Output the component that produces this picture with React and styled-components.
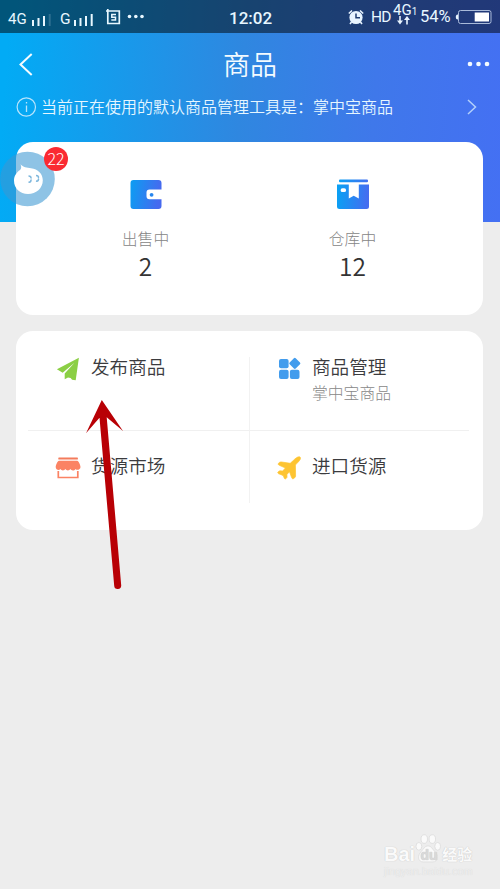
import React from "react";
import styled, { createGlobalStyle } from "styled-components";

const GlobalStyle = createGlobalStyle`
  *, *::before, *::after { box-sizing: border-box; }
  body {
    margin: 0;
    background: #ededed;
    font-family: Roboto, "Noto Sans CJK SC", sans-serif;
  }
  svg { display: block; flex: none; overflow: visible; }
`;

const Screen = styled.div`
  position: relative;
  width: 500px;
  height: 889px;
  overflow: hidden;
  background: #ededed;
`;

const Hero = styled.header`
  height: 222px;
  background: linear-gradient(94deg, #02abf5 2%, #2f87e0 48%, #3f78ea 74%, #4470f3 100%);
`;

const StatusBar = styled.div`
  display: grid;
  grid-template-columns: 229px 119px 1fr;
  height: 33px;
  background: rgba(0, 0, 0, 0.5);
  color: #e8f7ff;
`;

const StatusGroup = styled.div`
  display: flex;
  align-items: center;
  padding: ${(p) => p.$pad || "0"};
`;

const StatusText = styled.span`
  flex: none;
  font-size: ${(p) => p.$size || 15}px;
  font-weight: ${(p) => p.$weight || 400};
  line-height: 20px;
  width: ${(p) => p.$width}px;
  white-space: nowrap;
  letter-spacing: ${(p) => p.$spacing || 0}px;
`;

const Network = styled.div`
  display: flex;
  flex-direction: column;
  width: 27px;
  height: 27px;
  font-size: 15px;
  line-height: 14px;
  white-space: nowrap;

  sup {
    font-size: 10px;
    line-height: 1;
    vertical-align: 0;
  }
  svg { margin: -1px 0 0 4px; }
`;

const TitleBar = styled.div`
  display: grid;
  grid-template-columns: 52px 1fr 52px;
  align-items: center;
  height: 63px;
  padding: 0 0 1px;
  color: #f4fbff;

  h1 {
    margin: 3px 0 0;
    font-size: 27px;
    line-height: 40px;
    font-weight: 350;
    text-align: center;
  }
`;

const BackIcon = styled.svg`
  margin-left: 19px;
`;

const MoreIcon = styled.svg`
  margin-left: 20px;
`;

const Notice = styled.div`
  display: flex;
  align-items: center;
  height: 22px;
  padding: 0 23px 0 16px;
  color: #e6f6ff;
  font-size: 16px;
  font-weight: 350;
  line-height: 22px;

  span {
    flex: 1;
    margin: 2px 0 0 4px;
    white-space: nowrap;
  }
`;

const Content = styled.main`
  display: flex;
  flex-direction: column;
  gap: 16px;
  margin: -80px 17px 0 16px;
`;

const Card = styled.section`
  height: ${(p) => p.$height}px;
  border-radius: 17px;
  background: #fff;
`;

const Stats = styled(Card)`
  display: grid;
  grid-template-columns: 207px 207px;
  padding: 37px 0 0 26px;
`;

const Stat = styled.div`
  display: flex;
  flex-direction: column;
  align-items: center;
`;

const StatLabel = styled.span`
  margin-top: 19px;
  font-size: 15.8px;
  font-weight: 300;
  line-height: 24px;
  color: #858585;
`;

const StatValue = styled.span`
  font-family: "Noto Sans CJK SC", sans-serif;
  font-size: 24.5px;
  font-weight: 350;
  line-height: 28px;
  color: #333;
`;

const Menu = styled(Card)`
  display: grid;
  grid-template-columns: 222px 219px;
  grid-template-rows: 73px 73px;
  padding: 26px 14px 0 12px;
`;

const MenuItem = styled.div`
  display: flex;
  gap: 10px;
  padding: ${(p) => (p.$lower ? "25px" : "0")} 0 0 ${(p) => (p.$right ? "26px" : "27px")};
  border-right: ${(p) => (p.$right ? "0" : "1px solid #f2f2f2")};
  border-top: ${(p) => (p.$lower ? "1px solid #f0f0f0" : "0")};
`;

const MenuText = styled.div`
  display: flex;
  flex-direction: column;
  margin-top: -2px;
  white-space: nowrap;

  strong {
    font-size: 18.6px;
    font-weight: 350;
    line-height: 27px;
    color: #3b3b3e;
  }
  small {
    font-size: 15.8px;
    font-weight: 300;
    line-height: 24px;
    color: #888;
  }
`;

const Assistant = styled.div`
  position: absolute;
  top: 147px;
  left: 0;
  width: 70px;
  height: 60px;
`;

const Badge = styled.span`
  position: absolute;
  top: 0;
  left: 44px;
  width: 24px;
  height: 24px;
  border-radius: 50%;
  background: #fa2a32;
  color: #fff;
  font-family: "Noto Sans CJK SC", sans-serif;
  font-size: 16px;
  font-weight: 300;
  line-height: 23px;
  text-align: center;
`;

const Pointer = styled.svg`
  position: absolute;
  top: 398px;
  left: 80px;
`;

const Watermark = styled.div`
  position: absolute;
  left: 384px;
  top: 834px;
  width: 92px;
  color: #fafafa;
  text-shadow: 0 0 1px #c9c9c9, 0 0 1px #d4d4d4;
`;

const Brand = styled.div`
  display: flex;
  align-items: flex-end;
  height: 32px;
  font: 700 20px/24px "Liberation Sans", sans-serif;

  svg { margin: 0 1px 3px 0; }
  em {
    font: 700 15px/24px "Noto Sans CJK SC", sans-serif;
  }
`;

const Site = styled.div`
  font: 400 11px/11px "Liberation Sans", sans-serif;
  color: #eeeeee;
  text-shadow: 0 0 1px #d2d2d2;
  white-space: nowrap;
`;

function Signal({ faded }) {
  return (
    <svg width="21" height="14" viewBox="0 0 21 14" fill="#e8f7ff">
      <rect x="0" y="8" width="2" height="6" />
      <rect x="5.500" y="6" width="2" height="8" />
      <rect x="11" y="4" width="2" height="10" />
      <rect x="16.700" y="2" width="2" height="12" opacity={faded ? 0.18 : 1} />
    </svg>
  );
}

function WalletIcon() {
  return (
    <svg width="32" height="30" viewBox="0 0 32 30">
      <defs>
        <linearGradient id="wallet" x1="0" y1="0" x2="1" y2="0.15">
          <stop offset="0" stopColor="#0b9ef2" />
          <stop offset="1" stopColor="#4669ef" />
        </linearGradient>
      </defs>
      <path
        fill="url(#wallet)"
        d="M3.500 1h25a3 3 0 0 1 3 3v6.500H19.500a3 3 0 0 0-3 3v3.700a3 3 0 0 0 3 3h12V27a3 3 0 0 1-3 3h-25a3 3 0 0 1-3-3V4a3 3 0 0 1 3-3Z"
      />
      <circle cx="21.600" cy="15.800" r="1.900" fill="#2786ee" />
    </svg>
  );
}

function StoreIcon() {
  return (
    <svg width="32" height="30" viewBox="0 0 32 30">
      <defs>
        <linearGradient id="box" gradientUnits="userSpaceOnUse" x1="0" y1="8" x2="32" y2="11">
          <stop offset="0" stopColor="#08a2f4" />
          <stop offset="1" stopColor="#456cf0" />
        </linearGradient>
      </defs>
      <g fill="url(#box)">
        <rect x="2" y="0.500" width="29" height="2.800" rx="1" />
        <path
          fillRule="evenodd"
          d="M0 5.500h11.800v14l4.900-2.800 5.100 2.800v-14H32V27.500a2.500 2.500 0 0 1-2.500 2.500h-27A2.500 2.500 0 0 1 0 27.500ZM5.500 9.300a1.800 1.800 0 0 0 0 3.800h1.700a1.800 1.800 0 0 0 0-3.800Z"
        />
      </g>
    </svg>
  );
}

function PlaneIcon() {
  return (
    <svg width="26" height="24" viewBox="0 0 26 24">
      <path fill="#8bcf45" d="M23.900.7 1.900 12.200l5.800 3.600L19.500 5.800 9.700 16.500v5.800l3.300-1.900 2.600.7 1.500 1.700 3.600.5Z" />
    </svg>
  );
}

function GridIcon() {
  return (
    <svg width="26" height="24" viewBox="0 0 26 24" fill="#429ced">
      <rect x="3" y="2" width="9.600" height="9.300" rx="2" />
      <rect x="3" y="12.800" width="9.600" height="9.300" rx="2" />
      <rect x="13.900" y="12.800" width="9.600" height="9.300" rx="2" />
      <rect x="14.500" y="2" width="8.600" height="8.600" rx="1.300" transform="rotate(45 18.800 6.300)" />
    </svg>
  );
}

function MarketIcon() {
  return (
    <svg width="26" height="24" viewBox="0 0 26 24">
      <rect x="3.300" y="1.600" width="19.600" height="2" rx=".6" fill="#f47b5b" />
      <path
        fill="#fb8364"
        d="M4 4.800h18.200c1.400 0 3.300 4.700 3.300 6.200 0 2.700-3.700 3.800-5 1.900-1 2-4.200 2-5.100.2-1 1.900-4 1.900-5 0-1 1.900-4 1.900-5 0C4 15.100.7 13.900.7 11 .7 9.400 2.600 4.800 4 4.800Z"
      />
      <path fill="none" stroke="#fb8364" strokeWidth="1.700" d="M3.300 15v6.500h19.500V15" />
    </svg>
  );
}

function JetIcon() {
  return (
    <svg width="26" height="24" viewBox="0 0 26 24">
      <path
        fill="#fdc432"
        stroke="#fdc432"
        strokeWidth=".7"
        strokeLinejoin="round"
        d="M17.300 4.500c1.600-1.700 4-3.800 6-3.700 1.300.1 1.500 1.500.8 2.800-.8 1.500-3.200 3.800-4.700 5.400l.2 11.200c0 .8-1.600 2.500-2.600 2.600-.9 0-1.200-.7-1.500-1.500l-2-5.500-2.600 2.600.1 2.700c0 .8-1.300 2-2 1.900-.7-.1-1.300-2.400-1.900-3.400-1.300-.9-4.900-1.500-5.300-2.600-.3-.9 1.400-2.200 2.300-2.200l2.500.3L9.400 12 3.300 9.300c-1-.5-1.300-1-.9-1.800.6-1.200 2-1.700 3.300-1.500l8.500 1.300Z"
      />
    </svg>
  );
}

const statItems = [
  { label: "出售中", value: "2", Icon: WalletIcon },
  { label: "仓库中", value: "12", Icon: StoreIcon },
];

const menuItems = [
  { title: "发布商品", Icon: PlaneIcon },
  { title: "商品管理", note: "掌中宝商品", Icon: GridIcon },
  { title: "货源市场", Icon: MarketIcon },
  { title: "进口货源", Icon: JetIcon },
];

export default function App() {
  return (
    <Screen>
      <GlobalStyle />
      <Hero>
        <StatusBar>
          <StatusGroup $pad="4px 0 0 8px">
            <StatusText $width={24} $size={15}>4G</StatusText>
            <Signal faded />
            <StatusText $width={21} $size={15.5}>&nbsp;&thinsp;G</StatusText>
            <Signal />
            <svg width="26" height="20" viewBox="-11 0 26 20" fill="none" stroke="#e8f7ff">
              <path strokeWidth="1.700" d="M1.800 0v14.500h11.500V2H0" />
              <path strokeWidth="1.500" d="M10 5.500H5.800v2.700h3.700v2.800H5.300" />
            </svg>
            <svg width="26" height="14" viewBox="0 0 26 14" fill="#e8f7ff">
              <circle cx="8.500" cy="4.500" r="1.800" />
              <circle cx="14.800" cy="4.500" r="1.800" />
              <circle cx="21" cy="4.500" r="1.800" />
            </svg>
          </StatusGroup>
          <StatusGroup $pad="3px 0 0">
            <StatusText $width={50} $size={17} $weight={500}>12:02</StatusText>
          </StatusGroup>
          <StatusGroup>
            <svg width="23" height="16" viewBox="0 0 23 16">
              <circle cx="8" cy="8.500" r="6.600" fill="#e8f4ff" />
              <path d="M.8 4.500 4 1.500m8 0 3.200 3M3.500 13l-1.500 2m10.500-2 1.500 2" stroke="#e8f4ff" strokeWidth="1.600" />
              <path d="M8 4.500v4.300h4" fill="none" stroke="#1f3c70" strokeWidth="1.500" />
            </svg>
            <StatusText $width={22} $size={15.5} $spacing={-0.8}>HD</StatusText>
            <Network>
              <span>4G<sup>1</sup></span>
              <svg width="14" height="9" viewBox="0 0 14 9" fill="#e8f4ff">
                <path d="M2.200 0h1.600v4.500H6L3 8.500 0 4.500h2.200Zm7 8.500V4H7L10 0l3 4h-2.200v4.500Z" />
              </svg>
            </Network>
            <StatusText $width={36} $size={16.5}>54%</StatusText>
            <svg width="36" height="16" viewBox="0 0 36 16">
              <path d="M2 5.500C0 5.500-.2 7-.2 8s.2 2.500 2.200 2.500Z" fill="#e8f4ff" />
              <rect x="2.500" y="1.500" width="32.500" height="13" rx="2" fill="none" stroke="#a9bad9" />
              <rect x="18.700" y="3.500" width="14.300" height="9" fill="#fff" />
            </svg>
          </StatusGroup>
        </StatusBar>
        <TitleBar>
          <BackIcon width="14" height="23" viewBox="0 0 14 23">
            <path d="M12.700 1 1.500 11.500l11.200 10.500" fill="none" stroke="currentColor" strokeWidth="2" />
          </BackIcon>
          <h1>商品</h1>
          <MoreIcon width="24" height="6" viewBox="0 0 24 6" fill="currentColor">
            <circle cx="2" cy="3" r="2.300" />
            <circle cx="10.500" cy="3" r="2.300" />
            <circle cx="19" cy="3" r="2.300" />
          </MoreIcon>
        </TitleBar>
        <Notice>
          <svg width="21" height="22" viewBox="0 0 21 22" fill="none" stroke="#b8e4fc">
            <circle cx="10.300" cy="11" r="9.200" strokeWidth="1.200" />
            <path d="M10.500 9.500v6.500M10.500 6v1.500" strokeWidth="1.300" />
          </svg>
          <span>当前正在使用的默认商品管理工具是：掌中宝商品</span>
          <svg width="10" height="16" viewBox="0 0 10 16">
            <path d="m1 1 7.500 7L1 15" fill="none" stroke="#b3d0fb" strokeWidth="1.500" />
          </svg>
        </Notice>
      </Hero>

      <Content>
        <Stats $height={173}>
          {statItems.map(({ label, value, Icon }) => (
            <Stat key={label}>
              <Icon />
              <StatLabel>{label}</StatLabel>
              <StatValue>{value}</StatValue>
            </Stat>
          ))}
        </Stats>
        <Menu $height={199}>
          {menuItems.map(({ title, note, Icon }, i) => (
            <MenuItem key={title} $right={i % 2 === 1} $lower={i > 1}>
              <Icon />
              <MenuText>
                <strong>{title}</strong>
                {note && <small>{note}</small>}
              </MenuText>
            </MenuItem>
          ))}
        </Menu>
      </Content>

      <Assistant>
        <svg width="60" height="60" viewBox="0 0 60 60">
          <circle cx="27.500" cy="32" r="27.300" fill="#3d97d2" fillOpacity=".58" />
          <path
            fill="#fff"
            d="M20.500 17.200c2.500 3 6.500 3.500 10.500 4 7 .9 11.800 5.500 11.800 12 0 8-6.800 13.800-14.800 13.800S14 41.500 14 33.500c0-5 3-8.500 6-10.500 1.500-1.300 1.500-3.500.5-5.800Z"
          />
          <path
            fill="none"
            stroke="#7fb8dd"
            strokeWidth="1.600"
            d="M28.500 29c2 0 3 1 2.200 2.500m-2.200 3.500c2 .5 3-1 2.200-2.500M36 28.500c2 0 3 1 2.200 2.500M36 34c2 .5 3-1 2.200-2.500"
          />
        </svg>
        <Badge>22</Badge>
      </Assistant>

      <Pointer width="50" height="194" viewBox="0 0 50 194">
        <path fill="#b80005" d="M21.800 2 6 35.300l13.500-15.500L34.200 187.700a3.500 3.500 0 0 0 7-.5L26.700 19.200 43 33Z" />
      </Pointer>

      <Watermark>
        <Brand>
          Bai
          <svg width="26" height="29" viewBox="0 0 24 27" fill="#fafafa" stroke="#dadada" strokeWidth=".7">
            <ellipse cx="3.500" cy="11.500" rx="2.700" ry="3.600" />
            <ellipse cx="8.500" cy="4.700" rx="3" ry="4" />
            <ellipse cx="16" cy="4.700" rx="3" ry="4" />
            <ellipse cx="21" cy="11.500" rx="2.700" ry="3.600" />
            <path d="M12 11c3 0 4 3 6.500 5.500 3.500 3.500 3 9.500-2 9.500h-9c-5 0-5.500-6-2-9.500C8 14 9 11 12 11Z" />
            <text x="5" y="24" stroke="none" fill="#d9d9d9" fontSize="13">du</text>
          </svg>
          <em>经验</em>
        </Brand>
        <Site>jingyan.baidu.com</Site>
      </Watermark>
    </Screen>
  );
}
